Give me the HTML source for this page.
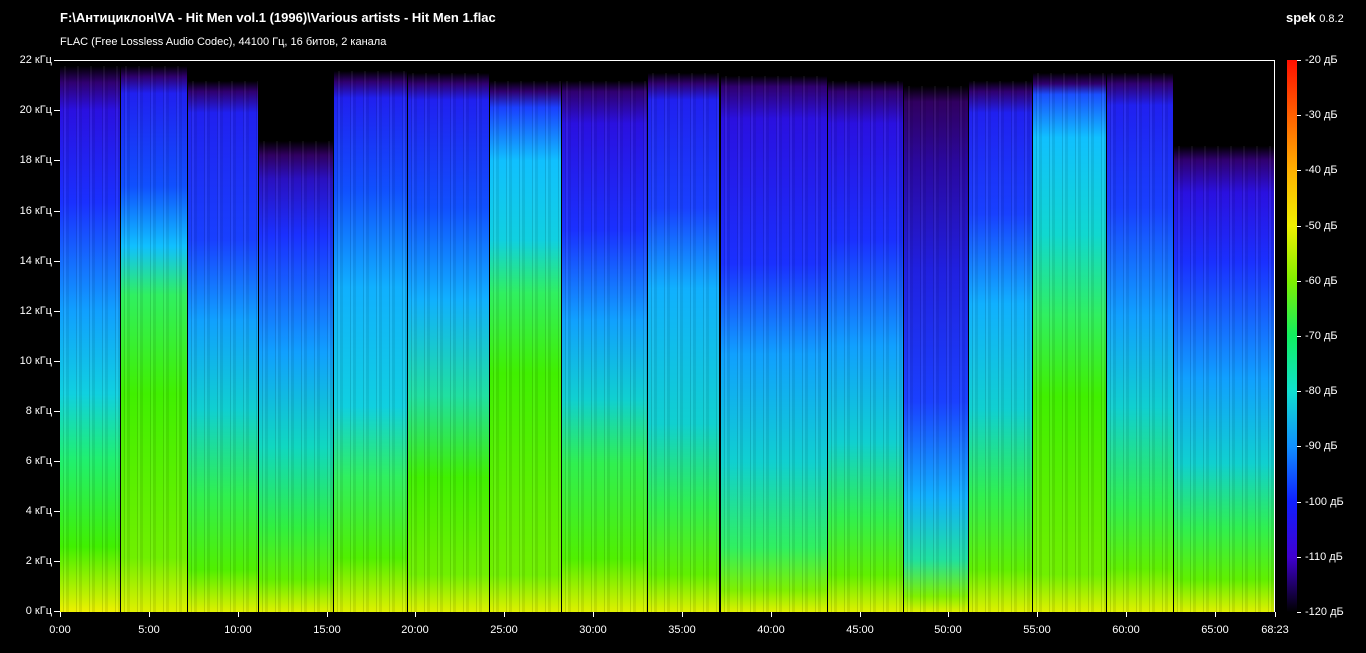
<!DOCTYPE html>
<html><head><meta charset="utf-8"><style>
body{margin:0;background:#000;width:1366px;height:653px;overflow:hidden;position:relative;font-family:"Liberation Sans",sans-serif;color:#fff}
.t{position:absolute;white-space:nowrap}
#plot{position:absolute;left:60px;top:60px;width:1215px;height:552px;border-top:1px solid #fff;border-right:1px solid #fff;box-sizing:border-box;overflow:hidden;background:#000}
.tr{position:absolute;bottom:0}
.tr::after{content:"";position:absolute;inset:0;background:repeating-linear-gradient(90deg,rgba(0,0,0,0) 0 3px,rgba(0,0,0,.12) 3px 4px,rgba(255,255,255,.05) 4px 6px,rgba(0,0,0,.08) 6px 9px,rgba(0,0,0,0) 9px 13px)}
.yl{position:absolute;right:1314px;font-size:11px;transform:translateY(-6px)}
.yt{position:absolute;left:54px;width:6px;height:1px;background:#fff}
.xl{position:absolute;top:624px;font-size:11px;transform:translateX(-50%)}
.xt{position:absolute;top:612px;width:1px;height:5px;background:#fff}
.cl{position:absolute;left:1305px;font-size:11px;transform:translateY(-6px)}
.ct{position:absolute;left:1297px;width:4px;height:1px;background:#fff}
</style></head><body>
<div class="t" style="left:60px;top:10px;font-size:13px;font-weight:bold">F:\Антициклон\VA - Hit Men vol.1 (1996)\Various artists - Hit Men 1.flac</div>
<div class="t" style="left:60px;top:36px;font-size:11px">FLAC (Free Lossless Audio Codec), 44100 Гц, 16 битов, 2 канала</div>
<div class="t" style="left:1286px;top:10px;font-size:13px;font-weight:bold">spek <span style="font-weight:normal;font-size:11px">0.8.2</span></div>
<div id="plot">
<div class="tr" style="left:0;width:60px;top:5px;background:linear-gradient(#000 0,#300070 3%,#2a10e0 8%,#1a30ff 25%,#10a0ff 45%,#10d0e0 60%,#20f070 72%,#40f000 88%,#c0f000 97%,#f0f000 100%)"></div>
<div class="tr" style="left:61px;width:66px;top:5px;background:linear-gradient(#000 0,#300070 2%,#2020f0 5%,#1050ff 22%,#10c0ff 33%,#30f060 42%,#40f000 60%,#70f000 90%,#e0f000 100%)"></div>
<div class="tr" style="left:128px;width:70px;top:20px;background:linear-gradient(#000 0,#300070 2%,#2020f0 6%,#1840ff 30%,#10a0ff 45%,#10d0d0 62%,#30f050 78%,#50f000 92%,#e0f000 100%)"></div>
<div class="tr" style="left:199px;width:74px;top:80px;background:linear-gradient(#000 0,#300060 3%,#2a10c0 8%,#1a30ff 20%,#10a0ff 45%,#10d8c0 65%,#30f040 82%,#60f000 93%,#e0f000 100%)"></div>
<div class="tr" style="left:274px;width:73px;top:10px;background:linear-gradient(#000 0,#300070 2%,#2020f0 5%,#1050ff 22%,#10b0ff 40%,#10d0e0 62%,#30f060 75%,#50f000 90%,#e0f000 100%)"></div>
<div class="tr" style="left:348px;width:81px;top:12px;background:linear-gradient(#000 0,#300070 2%,#2020f0 5%,#1050ff 25%,#10b0ff 42%,#20e0a0 60%,#40f000 75%,#70f000 93%,#e0f000 100%)"></div>
<div class="tr" style="left:430px;width:71px;top:20px;background:linear-gradient(#000 0,#300070 2%,#1a40ff 5%,#10c0ff 15%,#10d0e0 30%,#30f060 40%,#40f000 55%,#70f000 93%,#e0f000 100%)"></div>
<div class="tr" style="left:502px;width:85px;top:20px;background:linear-gradient(#000 0,#300070 2%,#2a10e0 8%,#1a30ff 28%,#10a0ff 45%,#10d0d0 60%,#30f050 72%,#50f000 90%,#e0f000 100%)"></div>
<div class="tr" style="left:588px;width:71px;top:12px;background:linear-gradient(#000 0,#300070 2%,#2020f0 5%,#1840ff 25%,#10b0ff 40%,#10d0d0 65%,#30f050 80%,#60f000 93%,#e0f000 100%)"></div>
<div class="tr" style="left:661px;width:106px;top:15px;background:linear-gradient(#000 0,#300070 2%,#2a10e0 8%,#1a30ff 35%,#10a0ff 52%,#10d0d0 72%,#30f060 88%,#80f000 96%,#e0f000 100%)"></div>
<div class="tr" style="left:768px;width:75px;top:20px;background:linear-gradient(#000 0,#300070 2%,#2a10e0 8%,#1a30ff 30%,#10a0ff 50%,#10d0d0 68%,#30f050 82%,#60f000 93%,#e0f000 100%)"></div>
<div class="tr" style="left:844px;width:64px;top:25px;background:linear-gradient(#000 0,#300060 3%,#2a08a0 15%,#2020e0 35%,#1a40ff 60%,#10b0ff 78%,#20e0a0 90%,#80f000 97%,#e0f000 100%)"></div>
<div class="tr" style="left:909px;width:63px;top:20px;background:linear-gradient(#000 0,#300070 2%,#2020f0 6%,#1840ff 25%,#10b0ff 42%,#10d0d0 62%,#30f050 78%,#60f000 92%,#e0f000 100%)"></div>
<div class="tr" style="left:973px;width:73px;top:12px;background:linear-gradient(#000 0,#300070 2%,#1a50ff 4%,#10c0ff 12%,#10d8d0 30%,#30f060 45%,#40f000 60%,#70f000 93%,#e0f000 100%)"></div>
<div class="tr" style="left:1047px;width:66px;top:12px;background:linear-gradient(#000 0,#300070 2%,#2020f0 6%,#1840ff 25%,#10a0ff 45%,#10d0d0 62%,#30f050 80%,#60f000 92%,#e0f000 100%)"></div>
<div class="tr" style="left:1114px;width:101px;top:85px;background:linear-gradient(#000 0,#300070 3%,#2a10e0 10%,#1a30ff 25%,#10a0ff 50%,#10d0d0 68%,#30f050 82%,#60f000 93%,#e0f000 100%)"></div>
</div>
<div style="position:absolute;left:1287px;top:60px;width:10px;height:552px;background:linear-gradient(#ff1000 0%,#ff6000 10%,#ffb000 20%,#f0f000 30%,#80f000 40%,#10f060 50%,#10e0d0 60%,#1090ff 70%,#1020ff 80%,#4000d0 90%,#000 100%)"></div>

<div class="yt" style="top:60px"></div><div class="yl" style="top:60px">22 кГц</div>
<div class="yt" style="top:110px"></div><div class="yl" style="top:110px">20 кГц</div>
<div class="yt" style="top:160px"></div><div class="yl" style="top:160px">18 кГц</div>
<div class="yt" style="top:211px"></div><div class="yl" style="top:211px">16 кГц</div>
<div class="yt" style="top:261px"></div><div class="yl" style="top:261px">14 кГц</div>
<div class="yt" style="top:311px"></div><div class="yl" style="top:311px">12 кГц</div>
<div class="yt" style="top:361px"></div><div class="yl" style="top:361px">10 кГц</div>
<div class="yt" style="top:411px"></div><div class="yl" style="top:411px">8 кГц</div>
<div class="yt" style="top:461px"></div><div class="yl" style="top:461px">6 кГц</div>
<div class="yt" style="top:511px"></div><div class="yl" style="top:511px">4 кГц</div>
<div class="yt" style="top:561px"></div><div class="yl" style="top:561px">2 кГц</div>
<div class="yt" style="top:611px"></div><div class="yl" style="top:611px">0 кГц</div>

<div class="xt" style="left:60px"></div><div class="xl" style="left:60px">0:00</div>
<div class="xt" style="left:149px"></div><div class="xl" style="left:149px">5:00</div>
<div class="xt" style="left:238px"></div><div class="xl" style="left:238px">10:00</div>
<div class="xt" style="left:327px"></div><div class="xl" style="left:327px">15:00</div>
<div class="xt" style="left:415px"></div><div class="xl" style="left:415px">20:00</div>
<div class="xt" style="left:504px"></div><div class="xl" style="left:504px">25:00</div>
<div class="xt" style="left:593px"></div><div class="xl" style="left:593px">30:00</div>
<div class="xt" style="left:682px"></div><div class="xl" style="left:682px">35:00</div>
<div class="xt" style="left:771px"></div><div class="xl" style="left:771px">40:00</div>
<div class="xt" style="left:860px"></div><div class="xl" style="left:860px">45:00</div>
<div class="xt" style="left:948px"></div><div class="xl" style="left:948px">50:00</div>
<div class="xt" style="left:1037px"></div><div class="xl" style="left:1037px">55:00</div>
<div class="xt" style="left:1126px"></div><div class="xl" style="left:1126px">60:00</div>
<div class="xt" style="left:1215px"></div><div class="xl" style="left:1215px">65:00</div>
<div class="xt" style="left:1275px"></div><div class="xl" style="left:1275px">68:23</div>

<div class="ct" style="top:60px"></div><div class="cl" style="top:60px">-20 дБ</div>
<div class="ct" style="top:115px"></div><div class="cl" style="top:115px">-30 дБ</div>
<div class="ct" style="top:170px"></div><div class="cl" style="top:170px">-40 дБ</div>
<div class="ct" style="top:226px"></div><div class="cl" style="top:226px">-50 дБ</div>
<div class="ct" style="top:281px"></div><div class="cl" style="top:281px">-60 дБ</div>
<div class="ct" style="top:336px"></div><div class="cl" style="top:336px">-70 дБ</div>
<div class="ct" style="top:391px"></div><div class="cl" style="top:391px">-80 дБ</div>
<div class="ct" style="top:446px"></div><div class="cl" style="top:446px">-90 дБ</div>
<div class="ct" style="top:502px"></div><div class="cl" style="top:502px">-100 дБ</div>
<div class="ct" style="top:557px"></div><div class="cl" style="top:557px">-110 дБ</div>
<div class="ct" style="top:612px"></div><div class="cl" style="top:612px">-120 дБ</div>
</body></html>
